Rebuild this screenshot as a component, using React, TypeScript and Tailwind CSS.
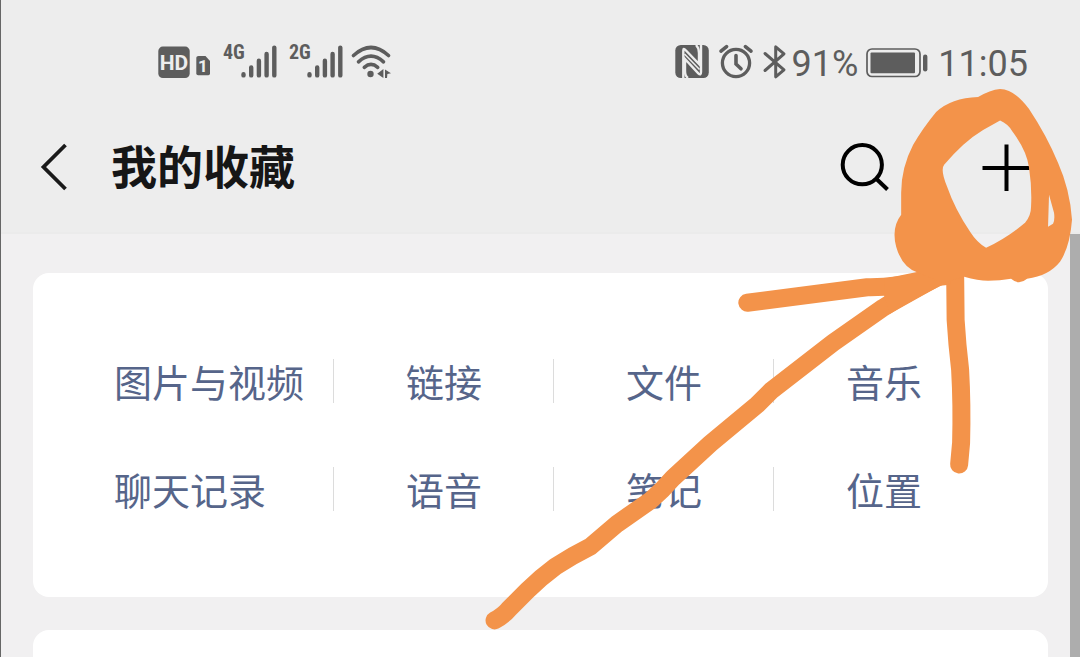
const categories = [
  ["图片与视频", "链接", "文件", "音乐"],
  ["聊天记录", "语音", "笔记", "位置"],
];

function SignalBars({ network }: { network: string }) {
  return (
    <div className="flex h-9 items-start">
      <span className="w-[18px] font-['Roboto_Condensed','Liberation_Sans_Narrow',Roboto,sans-serif] text-xl leading-4 font-bold">
        {network}
      </span>
      <svg width="36" height="36" viewBox="0 0 36 36" stroke="currentColor" strokeWidth="4.4" strokeLinecap="round" aria-hidden="true">
        <path d="M2.5 30.2v1.2M10.2 23.5v7.9M17.9 16.8v14.6M25.6 10v21.4M33.3 3.6v27.8" />
      </svg>
    </div>
  );
}

function HdIcon() {
  return (
    <svg width="54" height="36" viewBox="0 0 54 36" role="img" aria-label="HD 1">
      <rect x="1.3" y="2.6" width="31.4" height="31.4" rx="4.5" fill="currentColor" />
      <text x="17" y="26" textAnchor="middle" fill="#ededed" className="font-[Roboto,sans-serif] text-[21px] font-bold">
        HD
      </text>
      <path d="M41.5 12h7l4.500 5v12.500q0 1.700-1.700 1.700h-10.200q-1.800 0-1.800-1.700V13.700q0-1.700 2.200-1.700z" fill="currentColor" />
      <text x="46" y="28" textAnchor="middle" fill="#ededed" className="font-[Roboto,sans-serif] text-[17px] font-bold">
        1
      </text>
    </svg>
  );
}

function WifiIcon() {
  return (
    <svg width="42" height="36" viewBox="0 0 42 36" fill="none" stroke="currentColor" strokeWidth="3.6" strokeLinecap="round" aria-hidden="true">
      <path d="M2.5 11.5Q20 -4.5 37.5 11.5" />
      <path d="M7.5 17.8Q20 6.5 32.5 17.8" />
      <path d="M13.3 23.3Q20 17.5 26.7 23.3" />
      <circle cx="19.5" cy="30" r="3.2" fill="currentColor" stroke="none" />
      <path d="M32.4 25v9l-6.2-4.2zM34 25.5l6 3.7-3.6.9-.4 3.9h-2z" fill="currentColor" stroke="none" />
    </svg>
  );
}

function NfcIcon() {
  return (
    <svg width="36" height="36" viewBox="0 0 36 36" aria-hidden="true">
      <rect x="1.3" y="1" width="33.5" height="33" rx="5.5" fill="currentColor" />
      <g fill="none" stroke="#ededed">
        <path d="M9.3 34V6.5Q9.3 3.500 11.500 6L25 20V9Q25 4 22 1" strokeWidth="2.4" />
        <path d="M27 1v27q0 4-2.700 1.300L11 15V27q0 5 3 7" strokeWidth="2.4" />
        <path d="M10.500 10L25.500 25.500" strokeWidth="1.600" />
      </g>
    </svg>
  );
}

function AlarmIcon() {
  return (
    <svg width="36" height="36" viewBox="0 0 36 36" fill="none" stroke="currentColor" strokeWidth="3.3" strokeLinecap="round" aria-hidden="true">
      <circle cx="18" cy="19" r="13.6" />
      <path d="M18 11.5V20l5 4.8" strokeWidth="3.6" />
      <path d="M3 7.2L8.6 2.6M33 7.2L27.4 2.6" strokeWidth="3.6" />
    </svg>
  );
}

function BluetoothIcon() {
  return (
    <svg width="26" height="36" viewBox="0 0 26 36" fill="none" stroke="currentColor" strokeWidth="3" strokeLinejoin="round" strokeLinecap="round" aria-hidden="true">
      <path d="M3 9.5l19 16.3-8.3 7V2.8L22 9.8 3 26.5" />
    </svg>
  );
}

function BatteryIcon() {
  return (
    <svg width="62" height="36" viewBox="0 0 62 36" aria-hidden="true">
      <rect x="1" y="5" width="53" height="27.5" rx="5" fill="none" stroke="currentColor" strokeWidth="1.7" />
      <rect x="4.5" y="8.5" width="44.5" height="20.8" rx="1" fill="currentColor" />
      <rect x="57" y="10.5" width="4.4" height="17" rx="2.2" fill="currentColor" />
    </svg>
  );
}

function StatusBar() {
  return (
    <div className="flex items-center justify-between pt-10 pr-[52px] pb-4 pl-[156px] text-[#5d5d5d]">
      <div className="flex h-11 items-center gap-3">
        <HdIcon />
        <SignalBars network="4G" />
        <SignalBars network="2G" />
        <span className="-ml-1">
          <WifiIcon />
        </span>
      </div>
      <div className="flex h-11 items-center font-[Roboto,sans-serif] text-4xl">
        <div className="mr-1 flex items-center gap-2">
          <NfcIcon />
          <AlarmIcon />
          <BluetoothIcon />
        </div>
        <span className="pt-1 leading-10">91%</span>
        <span className="mr-2.5 ml-2">
          <BatteryIcon />
        </span>
        <time className="pt-1 leading-10">11:05</time>
      </div>
    </div>
  );
}

function Header() {
  return (
    <header className="flex h-[134px] items-center justify-between border-b-2 border-[#ebebeb] pr-[50px] pl-9">
      <div className="flex items-center gap-[38px]">
        <button type="button" aria-label="返回">
          <svg width="36" height="50" viewBox="0 0 36 50" fill="none" stroke="#1a1a1a" strokeWidth="3.8">
            <path d="M28.5 4L6.5 26l22 22" />
          </svg>
        </button>
        <h1 className="pb-1 text-[46px] leading-[60px] font-bold text-[#161616]">我的收藏</h1>
      </div>
      <div className="flex items-center gap-[92px]">
        <button type="button" aria-label="搜索">
          <svg width="50" height="50" viewBox="0 0 50 50" fill="none" stroke="#000" strokeWidth="4">
            <circle cx="22.3" cy="23.7" r="19.6" />
            <path d="M36 37.5L47.5 48.5" />
          </svg>
        </button>
        <button type="button" aria-label="添加">
          <svg width="48" height="50" viewBox="0 0 48 50" stroke="#000" strokeWidth="4">
            <path d="M.5 27h47M24.5 3.5V50" />
          </svg>
        </button>
      </div>
    </header>
  );
}

function Annotation() {
  return (
    <svg viewBox="0 0 1080 657" className="pointer-events-none absolute top-0 left-0 w-full" fill="none" aria-hidden="true">
      <g stroke="#f3934a" strokeWidth="18" strokeLinecap="round" strokeLinejoin="round">
        <path d="M494 621Q503 616 508 610L527 591Q540 578 555 567Q572 556 590 547L617 524L650 501Q662 491 673 478L710 444L757 405L771 391L833 343L883 308Q906 293 945 274" />
        <path d="M747 303L867 287.5Q895 288 928 280" />
        <path d="M955 270L955.5 320Q957 345 960 370Q962 405 961 443L959 465" />
      </g>
      <path d="M884 279L918 272L950 278V285L940 286L890 314L884 296Z" fill="#f3934a" />
      <path
        fill="#f3934a"
        fillRule="evenodd"
        d="M1000 89Q990 90 978 97Q951 98 936 112Q922 129 913 145Q901 168 901 193V215Q891 228 896 247Q902 268 918 273L943 283L964 277Q978 281 988 281Q1000 281 1011 279Q1019 286 1027 279Q1049 276 1060 262Q1070 247 1072 220Q1070 190 1058 163Q1047 136 1029 109Q1014 89 1000 89Z
        M1000 120.5Q1008 124 1012 131Q1027 151 1029 168Q1032 188 1031 207Q1031 216 1025 223Q1007 238 986 248Q977 243 970 232Q955 210 947 187Q940 170 944 165Q963 142 983 130Z
        M1049 195L1054 213Q1055 220 1053 224L1048 227Z"
      />
    </svg>
  );
}

export default function App() {
  return (
    <div className="relative flex min-h-screen flex-col border-l border-[#666] bg-[#ededed] font-['Noto_Sans_CJK_SC',sans-serif]">
      <StatusBar />
      <Header />
      <div className="flex flex-1 bg-[#f1f0f1]">
        <main className="flex flex-1 flex-col gap-[33px] pt-[39px] pr-[22px] pl-8">
          <section className="flex flex-col gap-16 rounded-2xl bg-white py-[86px] pr-[54px] pl-[81px]">
            {categories.map((row) => (
              <div key={row[0]} className="grid grid-cols-4">
                {row.map((label) => (
                  <button
                    key={label}
                    type="button"
                    className="h-11 border-r border-[#dcdcdc] pl-[72px] text-left text-[38px] leading-11 whitespace-nowrap text-[#56658a] first:pl-0 last:border-r-0"
                  >
                    {label}
                  </button>
                ))}
              </div>
            ))}
          </section>
          <section className="flex-1 rounded-t-2xl bg-white" />
        </main>
        <div className="w-2.5 bg-[#adadad]" />
      </div>
      <Annotation />
    </div>
  );
}
